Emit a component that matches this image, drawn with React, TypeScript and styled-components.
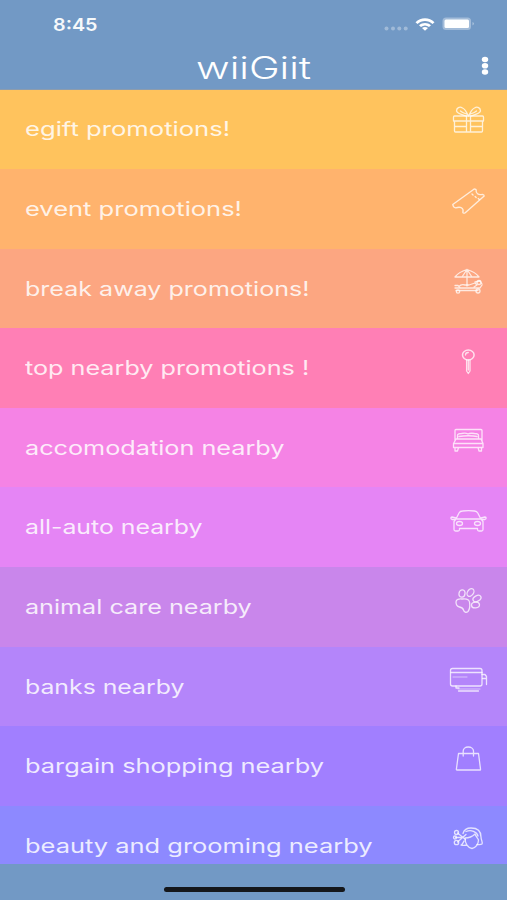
import React, { useLayoutEffect, useRef, useState } from "react";
import styled, { createGlobalStyle } from "styled-components";

const GlobalStyle = createGlobalStyle`
  * { box-sizing: border-box; }
  html, body { margin: 0; background: #7299c4; }
  body { font-family: Inter, "Open Sans", sans-serif; color: #fff; overflow: hidden; }
`;

const Screen = styled.main`
  width: 507px;
  height: 900px;
  display: flex;
  flex-direction: column;
  overflow: hidden;
  background: #7299c5;
`;

const StatusBar = styled.div`
  height: 48px;
  flex: none;
  display: flex;
  align-items: center;
  justify-content: space-between;
  padding: 1px 31px 0 53px;
`;

const StatusIcons = styled.div`
  display: flex;
  align-items: center;
  margin-bottom: 1px;
`;

const TitleBar = styled.header`
  height: 41.5px;
  flex: none;
  display: grid;
  grid-template-columns: 1fr 115px 1fr;
  align-items: center;
  border-bottom: 1px solid #8c9cae;
`;

const MenuButton = styled.button`
  grid-column: 3;
  justify-self: end;
  width: 20px;
  height: 26px;
  margin: 0 12.5px 4px 0;
  padding: 0;
  border: 0;
  background: none;
  color: #fff;
  display: flex;
  align-items: center;
  justify-content: center;
`;

const TitleSlot = styled.div`
  grid-column: 2;
  margin-top: 1px;
`;

const Categories = styled.nav`
  flex: 1;
  min-height: 0;
  overflow: hidden;
`;

const Row = styled.div<{ $color: string }>`
  height: 79.6px;
  display: flex;
  align-items: center;
  justify-content: space-between;
  padding: 1.5px 17px 0 25px;
  background: ${(p) => p.$color};
`;

const IconSlot = styled.span`
  width: 44px;
  height: 40px;
  flex: none;
  margin-bottom: 13.5px;
  color: rgba(255, 255, 255, 0.76);
  svg { display: block; }
`;

const BottomBar = styled.footer`
  height: 36px;
  flex: none;
  display: flex;
  justify-content: center;
  padding: 23px 0 0 1px;
`;

const HomeIndicator = styled.div`
  width: 181px;
  height: 5px;
  border-radius: 3px;
  background: #15171b;
`;

const Label = styled.span<{ $size: number; $weight: number; $opacity: number }>`
  display: block;
  width: max-content;
  white-space: nowrap;
  transform-origin: left center;
  font-size: ${(p) => p.$size}px;
  font-weight: ${(p) => p.$weight};
  line-height: 1.2;
  opacity: ${(p) => p.$opacity};
`;

type WideTextProps = { text: string; width: number; size: number; weight: number; opacity?: number };

/* Stretches its text horizontally until it fills the given width. */
function WideText({ text, width, size, weight, opacity = 1 }: WideTextProps) {
  const ref = useRef<HTMLSpanElement>(null);
  const [scale, setScale] = useState(1);
  useLayoutEffect(() => {
    if (ref.current) setScale(width / ref.current.offsetWidth);
  }, [text, width, size, weight]);
  return (
    <Label ref={ref} $size={size} $weight={weight} $opacity={opacity} style={{ transform: `scaleX(${scale})` }}>
      {text}
    </Label>
  );
}

const Gift = () => (
  <g transform="translate(.5 -2)">
    <path d="M8 15h28c.7 0 1 .3 1 1v4H7v-4c0-.7.3-1 1-1zM8 20h28v10c0 .7-.3 1-1 1H9c-.7 0-1-.3-1-1zM20 15v16M24 15v16M8 25.500h12M24 25.500h12" />
    <path d="M20 15c-4-1-9-2-10-5 0-3 3-5 6-3 3 1 4 5 6 8 2-3 3-7 6-8 3-2 6 0 6 3-1 3-6 4-10 5M20 13c-3-1-5-2-6-3M24 13c3-1 5-2 6-3" />
  </g>
);

const Ticket = () => (
  <g transform="translate(0 -1) scale(1.04 1)">
    <path d="M6.500 22.500 26.500 7.400c1-.7 2-.4 2.500.4-.3 2 .2 3.200 1.300 4 1.400 1 3 1.100 4.700.5.900.1 1.700.9 1.700 1.800L18.500 30.800c-1 .7-2 .4-2.300-.4.600-2 .1-3.700-1.400-4.600-1.600-1-3.500-.6-5.500 0-1.300-.2-2.600-1.800-2.800-3.300z" />
    <path d="m25 12 1 1m2 1.500 1 1m2 1 1 1" />
  </g>
);

const Beach = () => (
  <>
    <path d="M9 15c2.500-3.500 7-6 12-7.500 5 1.500 9.500 4 12 7.500zM16 15l5-7.500 5 7.500M21 7.500V24" />
    <path d="M9 26h25l2-3M10 28.500h22M9 23.500h3l2 2M13 24.500c2-2.500 4-2 6-1.500h4l6-2 2 2-3 2M29 20l5-1 2 3" />
    <circle cx="12" cy="29.500" r="1.700" /><circle cx="32" cy="29" r="2" /><circle cx="33" cy="20.500" r="2" />
  </>
);

const Pin = () => (
  <>
    <ellipse cx="22.300" cy="13" rx="5.800" ry="4.900" strokeWidth="1.500" />
    <path d="M19.500 13c0-1.500 1-2.500 2.800-2.500M20.600 18v11l1.700 2.500L24 29V18M22.300 18v10" />
  </>
);

const Bed = () => (
  <path transform="translate(0 -1)" d="M9 20V9.500c0-.8.500-1 1-1h25c.700 0 1 .5 1 1V20M11.500 18v-3.500c0-1.500 2-2 4-2 2-.4 5-.4 6.500.500 1.500-.9 4-.9 6.500-.5 2 0 4 .500 4 2V18M13 15.500c5-1 14-1 18 0M10 18h25l2 4.500v4H7.500v-4zM7.500 22.500H37M9 26.500v3.500h2.500l1-3.500M35.500 26.500v3.500H33l-1-3.500" />
);

const Car = () => (
  <>
    <path d="m10 18 3-6c.800-1.500 2-2 3.500-2 4-.6 8-.6 12 0 1.500.2 2.500.600 3.300 2l3 6M11 18h23M10 18l-2 2.500v8c0 1 .5 1.500 1.500 1.500H12c1 0 1.500-.5 1.500-1.500V27.500h18v1c0 1 .5 1.500 1.500 1.500h2.500c1 0 1.500-.5 1.500-1.500v-8L35 18M10 17l-4-1c-1.500 0-1.500 2 0 2.500h3M35 17l4-1c1.500 0 1.500 2 0 2.500h-3" />
    <ellipse cx="13.500" cy="22.500" rx="3" ry="2" /><ellipse cx="31.500" cy="22.500" rx="3" ry="2" />
  </>
);

const Paw = () => (
  <>
    <path d="M10 21c0-2.500 3-3.500 6-3 3-.5 7 0 7.500 3 .5 3 .500 7-1.500 9.500-2 1.500-4 .5-4.500-1.500-.5-2-2-2.500-4-3C11 25.500 10 23 10 21Z" />
    <ellipse cx="16" cy="12.500" rx="3" ry="3.700" transform="rotate(8 16 12.500)" />
    <ellipse cx="24.500" cy="11.500" rx="3" ry="4.200" transform="rotate(35 24.500 11.500)" />
    <ellipse cx="31" cy="17.500" rx="4.300" ry="2.800" transform="rotate(-30 31 17.500)" />
    <ellipse cx="29.500" cy="24" rx="4" ry="2.900" transform="rotate(-5 29.500 24)" />
  </>
);

const Card = () => (
  <>
    <rect x="4.500" y="8.500" width="31.500" height="17.500" rx="2" />
    <path d="M5 12.500h31M10 26v2h3M12.500 31h20M36 14.500h3l1.500 2v8M36.500 18.500h3.500" />
    <path d="M7 17h14M12 29h22" opacity=".45" />
  </>
);

const Bag = () => (
  <path d="M12.500 13.500h20l2 15.500c.1.700-.1 1-.700 1H11c-.600 0-.700-.400-.600-1zM17.200 16v-5c0-2.200 2-4 5-4s5.300 1.800 5.300 4v5" />
);

const Hair = () => (
  <g transform="translate(0 1)">
    <path d="M17 12.500c1-3.500 4-5.500 8-5.500 7 0 10 4 10 9 0 3 2 5 1 7-1.500 1-3 .5-5 .5M20 10.500c5-2 11 0 12 4.500" />
    <path d="M19 17c5 0 8-2 10-4 1 3 3 4 3.500 6 0 4-3 8-6.500 8.500-4-.5-7-5-7-10.500zM18 20c-1 2-1.500 3.500-3 4 2 .5 4 .5 6 0" />
    <path d="m11.500 21 8.500-7.500M11.500 12l8 6.500M9.500 16.500h8" />
    <circle cx="10.500" cy="11.500" r="2" /><circle cx="10.500" cy="21.500" r="2.200" /><circle cx="9" cy="16.500" r="1.500" />
  </g>
);

const categories = [
  { text: "egift promotions!", width: 205, color: "#ffc35d", Icon: Gift },
  { text: "event promotions!", width: 217, color: "#ffb36d", Icon: Ticket },
  { text: "break away promotions!", width: 284, color: "#fca681", Icon: Beach },
  { text: "top nearby promotions !", width: 284, color: "#ff7fb5", Icon: Pin },
  { text: "accomodation nearby", width: 260, color: "#f583e5", Icon: Bed },
  { text: "all-auto nearby", width: 177, color: "#e585f5", Icon: Car },
  { text: "animal care nearby", width: 227, color: "#c986eb", Icon: Paw },
  { text: "banks nearby", width: 159, color: "#b485fa", Icon: Card },
  { text: "bargain shopping nearby", width: 299, color: "#a17fff", Icon: Bag },
  { text: "beauty and grooming nearby", width: 347, color: "#8d89ff", Icon: Hair },
];

export default function App() {
  return (
    <>
      <GlobalStyle />
      <Screen>
        <StatusBar>
          <WideText text="8:45" width={44} size={17.5} weight={600} opacity={0.94} />
          <StatusIcons>
            <svg width="92" height="18" viewBox="0 0 92 18" fill="#fff">
              <g opacity=".33"><circle cx="2.500" cy="13.500" r="2" /><circle cx="9" cy="13.500" r="2" /><circle cx="15.300" cy="13.500" r="2" /><circle cx="21.700" cy="13.500" r="2" /></g>
              <path d="M31.500 7.200c5-5.200 14-5.200 19 0l-2 1.700c-4-3.900-11-3.900-15 0zM35 10.300c3.500-3.200 8.500-3.200 12 0l-2 1.700c-2.500-2-5.500-2-8 0zM38 13c2-1.500 4-1.500 6 0l-3 2.700z" />
              <rect x="58.500" y="2.500" width="28.500" height="12.500" rx="3.500" opacity=".35" />
              <rect x="60.500" y="4.400" width="24.500" height="8.700" rx="1.500" />
              <path d="M88.500 7q3 1.700 0 3.500z" opacity=".4" />
            </svg>
          </StatusIcons>
        </StatusBar>
        <TitleBar>
          <TitleSlot><WideText text="wiiGiit" width={115} size={30.5} weight={300} /></TitleSlot>
          <MenuButton aria-label="Menu">
            <svg width="8" height="20" viewBox="0 0 8 20" fill="currentColor"><ellipse cx="4" cy="3.500" rx="3.200" ry="2.800" /><ellipse cx="4" cy="9.800" rx="3.200" ry="2.800" /><ellipse cx="4" cy="16" rx="3.200" ry="2.800" /></svg>
          </MenuButton>
        </TitleBar>
        <Categories>
          {categories.map(({ text, width, color, Icon }) => (
            <Row key={text} $color={color}>
              <WideText text={text} width={width} size={19.5} weight={400} opacity={0.84} />
              <IconSlot>
                <svg width="44" height="40" viewBox="0 0 44 40" fill="none" stroke="currentColor" strokeWidth="1.3" strokeLinecap="round" strokeLinejoin="round"><Icon /></svg>
              </IconSlot>
            </Row>
          ))}
        </Categories>
        <BottomBar><HomeIndicator /></BottomBar>
      </Screen>
    </>
  );
}
